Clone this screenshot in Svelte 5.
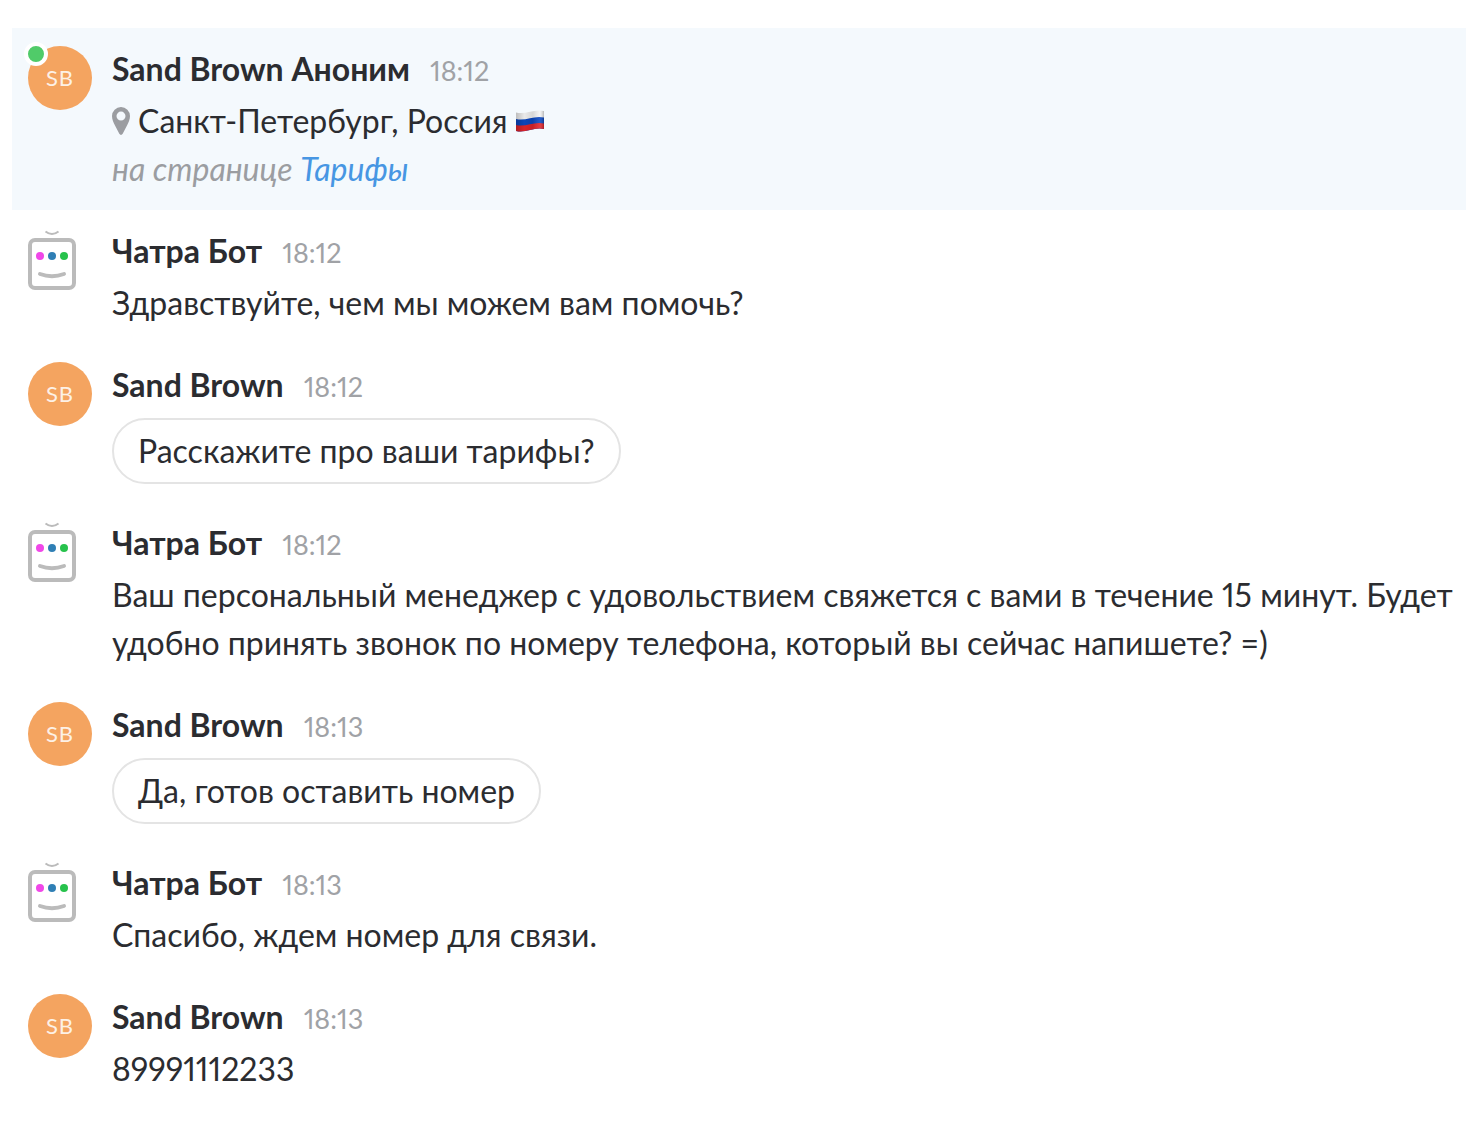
<script lang="ts">
  type Message = {
    author: 'guest' | 'bot';
    name: string;
    time: string;
    text?: string;
    quick?: boolean;
    visitor?: { place: string; page: string };
  };

  const messages: Message[] = [
    {
      author: 'guest',
      name: 'Sand Brown Аноним',
      time: '18:12',
      visitor: { place: 'Санкт-Петербург, Россия', page: 'Тарифы' },
    },
    { author: 'bot', name: 'Чатра Бот', time: '18:12', text: 'Здравствуйте, чем мы можем вам помочь?' },
    { author: 'guest', name: 'Sand Brown', time: '18:12', text: 'Расскажите про ваши тарифы?', quick: true },
    {
      author: 'bot',
      name: 'Чатра Бот',
      time: '18:12',
      text: 'Ваш персональный менеджер с удовольствием свяжется с вами в течение 15 минут. Будет удобно принять звонок по номеру телефона, который вы сейчас напишете? =)',
    },
    { author: 'guest', name: 'Sand Brown', time: '18:13', text: 'Да, готов оставить номер', quick: true },
    { author: 'bot', name: 'Чатра Бот', time: '18:13', text: 'Спасибо, ждем номер для связи.' },
    { author: 'guest', name: 'Sand Brown', time: '18:13', text: '89991112233' },
  ];
</script>

<main class="chat">
  {#each messages as message}
    <article class="message" class:intro={message.visitor}>
      <div class="side">
        {#if message.author === 'guest'}
          <div class="avatar">
            SB
            {#if message.visitor}<span class="online"></span>{/if}
          </div>
        {:else}
          <svg class="robot" viewBox="0 0 48 64" aria-hidden="true">
            <path d="M17.500 3.500Q24 8.500 30.500 3.500" fill="none" stroke="#bbb" stroke-width="2" />
            <rect x="2" y="12" width="44" height="48" rx="5" fill="#fff" stroke="#bbb" stroke-width="4" />
            <circle cx="12" cy="28" r="4" fill="#f047e8" />
            <circle cx="24" cy="28" r="4" fill="#2f7fb5" />
            <circle cx="36" cy="28" r="4" fill="#27c24c" />
            <path d="M12 46Q24 50.500 36 46" fill="none" stroke="#bbb" stroke-width="4" stroke-linecap="round" />
          </svg>
        {/if}
      </div>
      <div class="body">
        <header class="head">
          <strong class="name">{message.name}</strong>
          <time class="time">{message.time}</time>
        </header>
        {#if message.visitor}
          <p class="text place">
            <svg class="pin" viewBox="0 0 18 28" aria-hidden="true">
              <path
                fill="#9b9da1"
                fill-rule="evenodd"
                d="M9 0a9 9 0 0 1 9 9c0 3.500-1.500 6.500-3 9.500l-4.300 8.300c-.8 1.500-2.600 1.500-3.400 0L3 18.500C1.500 15.500 0 12.500 0 9a9 9 0 0 1 9-9Zm0 4.600a4.500 4.500 0 1 0 0 9 4.500 4.500 0 0 0 0-9Z"
              />
            </svg>
            <span>{message.visitor.place}</span>
            <svg class="flag" viewBox="0 0 28 22" role="img" aria-label="Россия">
              <defs>
                <clipPath id="wave"><path d="M0 2.500C10 5 18-1.500 28 1V19C18 16.500 10 23.500 0 21Z" /></clipPath>
                <linearGradient id="fold">
                  <stop offset="0" stop-color="#000" stop-opacity=".22" />
                  <stop offset=".3" stop-color="#000" stop-opacity=".04" />
                  <stop offset=".6" stop-color="#000" stop-opacity=".12" />
                  <stop offset=".85" stop-color="#fff" stop-opacity=".1" />
                  <stop offset="1" stop-color="#000" stop-opacity=".25" />
                </linearGradient>
              </defs>
              <g clip-path="url(#wave)">
                <rect width="28" height="22" fill="#f3f3f3" />
                <path d="M0 9C10 11.500 18 5 28 7.500V22H0Z" fill="#0b48c2" />
                <path d="M0 15C10 17.500 18 11 28 13.500V24H0Z" fill="#e0252c" />
                <rect width="28" height="22" fill="url(#fold)" />
              </g>
            </svg>
          </p>
          <p class="text page">на странице <a href="#tariffs">{message.visitor.page}</a></p>
        {:else}
          <p class="text" class:quick={message.quick}>{message.text}</p>
        {/if}
      </div>
    </article>
  {/each}
</main>

<style>
  :global(body) {
    background: #fff;
  }

  .chat {
    padding: 28px 14px 12px 12px;
    color: #2b2c30;
    font-family: Lato, 'Open Sans', 'Noto Sans', sans-serif;
    font-size: 32px;
    font-variant-numeric: proportional-nums;
    line-height: 48px;
  }

  .message {
    display: flex;
    gap: 20px;
    padding: 18px 0 17px 16px;
  }

  .intro {
    background: #f4f9fd;
  }

  .side {
    flex: 0 0 64px;
  }

  .avatar {
    position: relative;
    width: 64px;
    height: 64px;
    border-radius: 50%;
    background: #f4a460;
    color: #fdf1e6;
    font-size: 22px;
    line-height: 64px;
    letter-spacing: 1px;
    text-align: center;
  }

  .online {
    position: absolute;
    top: -4px;
    left: -4px;
    width: 16px;
    height: 16px;
    border: 4px solid #fff;
    border-radius: 50%;
    background: #50cb69;
  }

  .robot {
    display: block;
    width: 48px;
    height: 64px;
  }

  .body {
    flex: 1;
    min-width: 0;
  }

  .head {
    display: flex;
    align-items: baseline;
    gap: 20px;
    margin-bottom: 5px;
    line-height: 46px;
  }

  .name {
    font-weight: 700;
  }

  .time {
    color: #a0a2a6;
    font-size: 27px;
    line-height: 32px;
  }

  .text {
    margin: 0;
  }

  .place {
    display: flex;
    align-items: center;
  }

  .pin {
    width: 18px;
    height: 28px;
    margin-right: 8px;
  }

  .flag {
    width: 28px;
    height: 22px;
    margin-left: 8px;
  }

  .page {
    color: #9b9da1;
    font-style: italic;
  }

  .page a {
    color: #4796e3;
    text-decoration: none;
  }

  .quick {
    width: fit-content;
    margin: 10px 0 1px;
    padding: 7px 24px;
    border: 2px solid #e4e4e4;
    border-radius: 33px;
  }
</style>
